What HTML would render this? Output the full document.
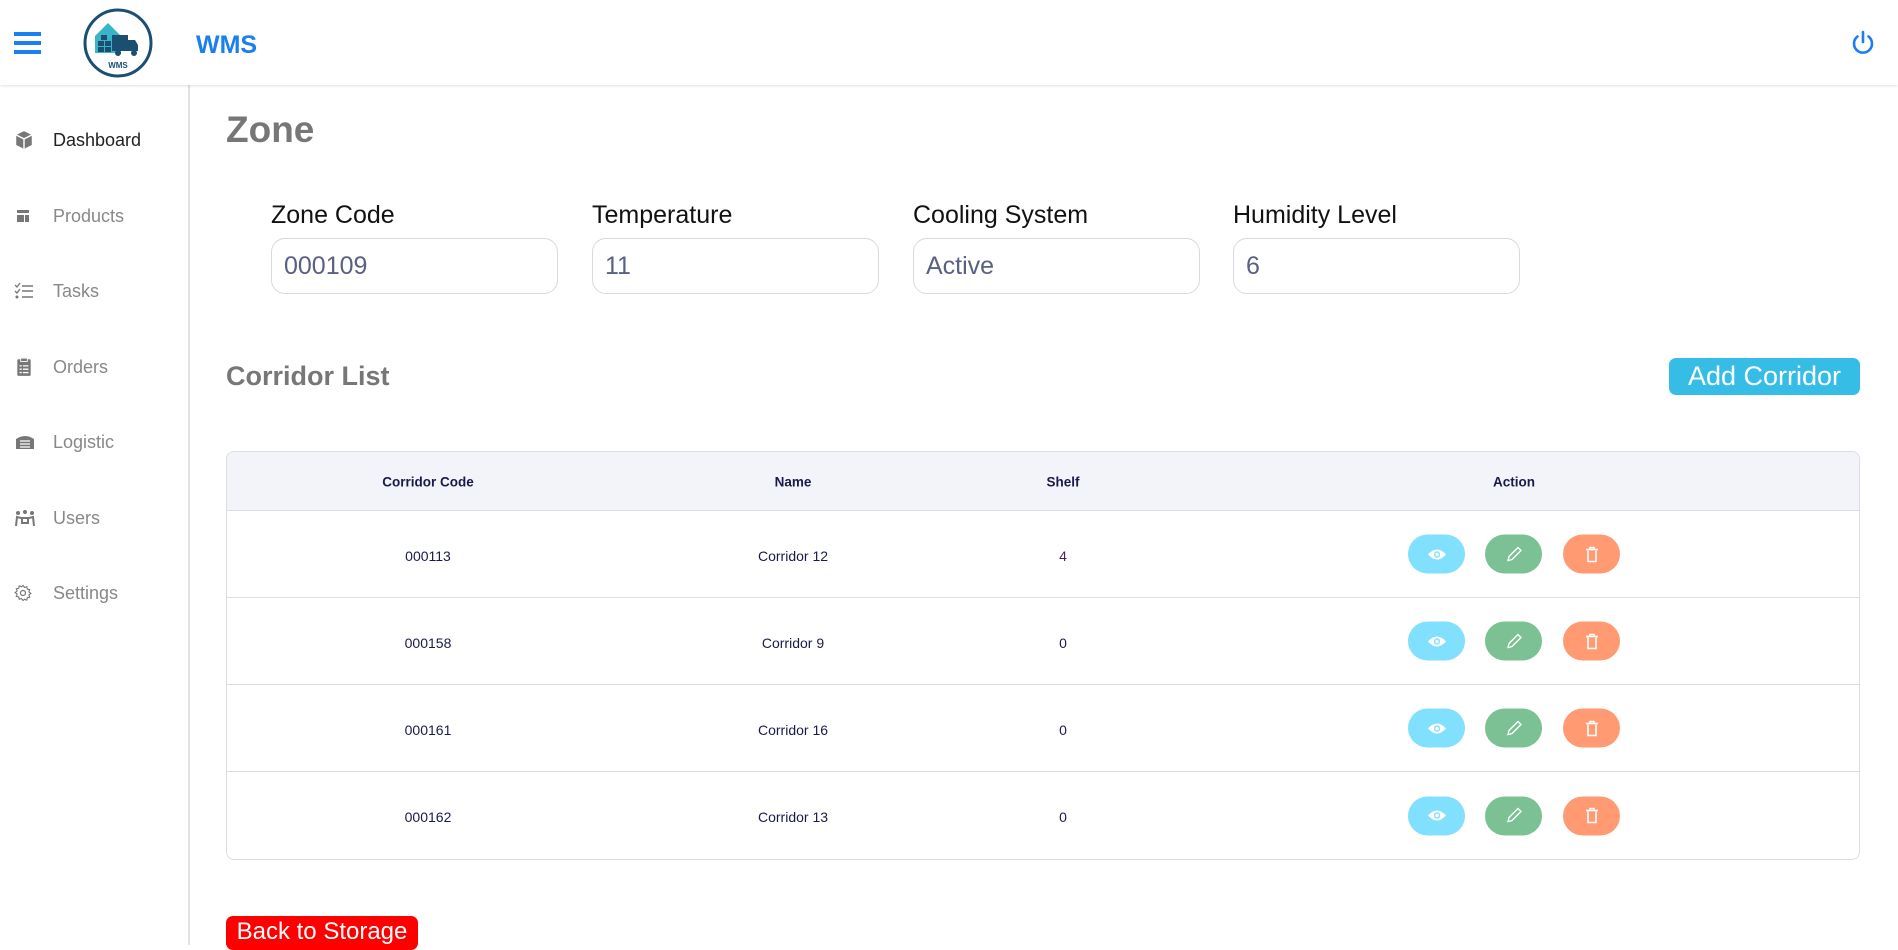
<!DOCTYPE html>
<html><head><meta charset="utf-8"><style>
*{box-sizing:border-box;margin:0;padding:0}
body{width:1898px;height:945px;overflow:hidden;background:#fff;font-family:"Liberation Sans",sans-serif;position:relative}
.hdr{position:absolute;left:0;top:0;width:1898px;height:85px;background:#fff;box-shadow:0 1px 3px rgba(0,0,0,.12);z-index:2}
.side{position:absolute;left:0;top:85px;width:190px;height:860px;border-right:2px solid #e2e2e2}
.item{position:absolute;left:0;height:30px;display:flex;align-items:center;font-size:18px;color:#888}
.item svg{position:absolute;left:14px}
.item span{position:absolute;left:53px;white-space:nowrap}
.abs{position:absolute}
.lbl{position:absolute;top:201px;font-size:25px;color:#111}
.inp{position:absolute;top:238px;width:287px;height:56px;border:1px solid #d8d8e0;border-radius:14px;font-size:25px;color:#5a6080;padding:13px 12px}
.tbl{position:absolute;left:226px;top:451px;width:1634px;height:409px;border:1px solid #dcdde3;border-radius:8px;overflow:hidden}
.th{height:59px;background:#f3f4f9;border-bottom:1px solid #dcdde3;position:relative;font-weight:bold;font-size:13.5px;color:#1a1a4a}
.row{height:87px;border-bottom:1px solid #dcdde3;position:relative;font-size:14px;color:#1a1a4a}
.c{position:absolute;top:52%;transform:translate(-50%,-50%);white-space:nowrap}
.b{position:absolute;top:50%;transform:translateY(-50%);width:57px;height:39px;border-radius:20px;display:flex;align-items:center;justify-content:center}
</style></head><body>
<div class="hdr">
<svg class="abs" style="left:14px;top:32px" width="27" height="22"><rect y="0" width="27" height="4" fill="#1a7fef"/><rect y="9" width="27" height="4" fill="#1a7fef"/><rect y="18" width="27" height="4" fill="#1a7fef"/></svg>
<svg class="abs" style="left:81px;top:8px" width="74" height="70" viewBox="0 0 74 70">
<circle cx="37" cy="35" r="33" fill="#fff" stroke="#1b4f72" stroke-width="3"/>
<path d="M14 28 L27 15 L40 28 L40 45 L14 45 Z" fill="#3ab5c8"/>
<rect x="17" y="33" width="6" height="5" fill="#1b4f72"/><rect x="24" y="33" width="6" height="5" fill="#1b4f72"/><rect x="20" y="27" width="6" height="5" fill="#1b4f72"/><rect x="17" y="39" width="6" height="5" fill="#1b4f72"/><rect x="24" y="39" width="6" height="5" fill="#1b4f72"/>
<rect x="31" y="27" width="16" height="16" fill="#1b4f72"/><path d="M47 32 L54 32 L57 37 L57 43 L47 43Z" fill="#1b4f72"/>
<circle cx="37" cy="45" r="3" fill="#1b4f72"/><circle cx="53" cy="45" r="3" fill="#1b4f72"/>
<text x="37" y="60" font-size="8" font-weight="bold" text-anchor="middle" fill="#1b4f72" font-family="Liberation Sans">WMS</text>
</svg>
<div class="abs" style="left:196px;top:31px;font-size:25px;font-weight:bold;color:#1a7fef">WMS</div>
<svg class="abs" style="left:1850px;top:30px" width="26" height="26" viewBox="0 0 26 26"><path d="M7.5 6.5 A9 9 0 1 0 18.5 6.5" fill="none" stroke="#1a7fef" stroke-width="2.6" stroke-linecap="round"/><line x1="13" y1="2" x2="13" y2="12" stroke="#1a7fef" stroke-width="2.6" stroke-linecap="round"/></svg>
</div>
<div class="side">
<div class="item" style="top:40px;color:#222"><svg width="20" height="20" viewBox="0 0 18 18"><path d="M9 1 L16 4.5 L16 13.5 L9 17 L2 13.5 L2 4.5Z" fill="#777"/><path d="M2 4.5 L9 8 L16 4.5 M9 8 L9 17" stroke="#fff" stroke-width="1.3" fill="none"/></svg><span>Dashboard</span></div>
<div class="item" style="top:116px"><svg width="18" height="18" viewBox="0 0 18 18"><rect x="3" y="3" width="12" height="3" fill="#777"/><rect x="3" y="8" width="7" height="7" fill="#777"/><rect x="11" y="8" width="4" height="7" fill="#777"/></svg><span>Products</span></div>
<div class="item" style="top:191px"><svg width="20" height="18" viewBox="0 0 20 18"><path d="M1 3 L3 5 L6 1 M1 9 L3 11 L6 7" stroke="#777" stroke-width="1.3" fill="none"/><circle cx="3" cy="15" r="1.5" fill="#777"/><path d="M8 4h11M8 9h11M8 15h11" stroke="#777" stroke-width="1.6"/></svg><span>Tasks</span></div>
<div class="item" style="top:267px"><svg width="20" height="20" viewBox="0 0 18 18"><rect x="3" y="2" width="12" height="15" rx="1" fill="#777"/><rect x="6" y="1" width="6" height="3" fill="#777" stroke="#fff" stroke-width=".8"/><path d="M5 8h2M8 8h5M5 11h2M8 11h5M5 14h2M8 14h5" stroke="#fff" stroke-width="1.2"/></svg><span>Orders</span></div>
<div class="item" style="top:342px"><svg width="22" height="18" viewBox="0 0 20 18"><path d="M1 6 Q10 0 19 6 L19 16 L1 16Z" fill="#777"/><path d="M5 8h10M5 11h10M5 14h10" stroke="#fff" stroke-width="1.2"/></svg><span>Logistic</span></div>
<div class="item" style="top:418px"><svg width="22" height="18" viewBox="0 0 22 18"><circle cx="4" cy="4" r="2" fill="#777"/><circle cx="11" cy="3" r="2" fill="#777"/><circle cx="18" cy="4" r="2" fill="#777"/><path d="M2 17 L3 8 L7 9 L15 9 L19 8 L20 17 M8 9 L8 14 L14 14 L14 9" stroke="#777" stroke-width="2" fill="none"/></svg><span>Users</span></div>
<div class="item" style="top:493px"><svg width="18" height="18" viewBox="0 0 18 18"><circle cx="9" cy="9" r="2.5" fill="none" stroke="#777" stroke-width="1.2"/><path d="M9 1.5l1.5 2 2.3-.8.5 2.4 2.4.5-.8 2.3 2 1.5-2 1.5.8 2.3-2.4.5-.5 2.4-2.3-.8L9 16.5l-1.5-2-2.3.8-.5-2.4-2.4-.5.8-2.3-2-1.5 2-1.5-.8-2.3 2.4-.5.5-2.4 2.3.8Z" fill="none" stroke="#777" stroke-width="1.1"/></svg><span>Settings</span></div>
</div>
<div class="abs" style="left:226px;top:109px;font-size:37px;font-weight:bold;color:#777">Zone</div>
<div class="lbl" style="left:271px">Zone Code</div><div class="lbl" style="left:592px">Temperature</div><div class="lbl" style="left:913px">Cooling System</div><div class="lbl" style="left:1233px">Humidity Level</div>
<div class="inp" style="left:271px">000109</div><div class="inp" style="left:592px">11</div><div class="inp" style="left:913px">Active</div><div class="inp" style="left:1233px">6</div>
<div class="abs" style="left:226px;top:361px;font-size:27px;font-weight:bold;color:#777">Corridor List</div>
<div class="abs" style="left:1669px;top:358px;width:191px;height:37px;background:#36bde6;border-radius:7px;color:#fff;font-size:27px;text-align:center;line-height:37px">Add Corridor</div>
<div class="tbl">
<div class="th"><div class="c" style="left:201px">Corridor Code</div><div class="c" style="left:566px">Name</div><div class="c" style="left:836px">Shelf</div><div class="c" style="left:1287px">Action</div></div>
<div class="row"><div class="c" style="left:201px">000113</div><div class="c" style="left:566px">Corridor 12</div><div class="c" style="left:836px;color:#5a1a5a">4</div>
<div class="b" style="left:1181px;background:#80e0fd"><svg width="20" height="14" viewBox="0 0 20 14"><path d="M1 7 Q10 -3 19 7 Q10 17 1 7Z" fill="#fff"/><circle cx="10" cy="7" r="3.2" fill="#80e0fd"/><circle cx="10" cy="7" r="1.8" fill="#fff"/></svg></div>
<div class="b" style="left:1258px;background:#7bc193"><svg width="18" height="18" viewBox="0 0 18 18"><path d="M3 15 L4 11 L13 2 L16 5 L7 14Z" fill="none" stroke="#fff" stroke-width="1.4"/></svg></div>
<div class="b" style="left:1336px;background:#ff9a72"><svg width="14" height="16" viewBox="0 0 14 16"><path d="M1 3h12M5 3V1h4v2M3 4v11h8V4" fill="none" stroke="#fff" stroke-width="1.6"/></svg></div></div>
<div class="row"><div class="c" style="left:201px">000158</div><div class="c" style="left:566px">Corridor 9</div><div class="c" style="left:836px">0</div>
<div class="b" style="left:1181px;background:#80e0fd"><svg width="20" height="14" viewBox="0 0 20 14"><path d="M1 7 Q10 -3 19 7 Q10 17 1 7Z" fill="#fff"/><circle cx="10" cy="7" r="3.2" fill="#80e0fd"/><circle cx="10" cy="7" r="1.8" fill="#fff"/></svg></div>
<div class="b" style="left:1258px;background:#7bc193"><svg width="18" height="18" viewBox="0 0 18 18"><path d="M3 15 L4 11 L13 2 L16 5 L7 14Z" fill="none" stroke="#fff" stroke-width="1.4"/></svg></div>
<div class="b" style="left:1336px;background:#ff9a72"><svg width="14" height="16" viewBox="0 0 14 16"><path d="M1 3h12M5 3V1h4v2M3 4v11h8V4" fill="none" stroke="#fff" stroke-width="1.6"/></svg></div></div>
<div class="row"><div class="c" style="left:201px">000161</div><div class="c" style="left:566px">Corridor 16</div><div class="c" style="left:836px">0</div>
<div class="b" style="left:1181px;background:#80e0fd"><svg width="20" height="14" viewBox="0 0 20 14"><path d="M1 7 Q10 -3 19 7 Q10 17 1 7Z" fill="#fff"/><circle cx="10" cy="7" r="3.2" fill="#80e0fd"/><circle cx="10" cy="7" r="1.8" fill="#fff"/></svg></div>
<div class="b" style="left:1258px;background:#7bc193"><svg width="18" height="18" viewBox="0 0 18 18"><path d="M3 15 L4 11 L13 2 L16 5 L7 14Z" fill="none" stroke="#fff" stroke-width="1.4"/></svg></div>
<div class="b" style="left:1336px;background:#ff9a72"><svg width="14" height="16" viewBox="0 0 14 16"><path d="M1 3h12M5 3V1h4v2M3 4v11h8V4" fill="none" stroke="#fff" stroke-width="1.6"/></svg></div></div>
<div class="row" style="border-bottom:none"><div class="c" style="left:201px">000162</div><div class="c" style="left:566px">Corridor 13</div><div class="c" style="left:836px">0</div>
<div class="b" style="left:1181px;background:#80e0fd"><svg width="20" height="14" viewBox="0 0 20 14"><path d="M1 7 Q10 -3 19 7 Q10 17 1 7Z" fill="#fff"/><circle cx="10" cy="7" r="3.2" fill="#80e0fd"/><circle cx="10" cy="7" r="1.8" fill="#fff"/></svg></div>
<div class="b" style="left:1258px;background:#7bc193"><svg width="18" height="18" viewBox="0 0 18 18"><path d="M3 15 L4 11 L13 2 L16 5 L7 14Z" fill="none" stroke="#fff" stroke-width="1.4"/></svg></div>
<div class="b" style="left:1336px;background:#ff9a72"><svg width="14" height="16" viewBox="0 0 14 16"><path d="M1 3h12M5 3V1h4v2M3 4v11h8V4" fill="none" stroke="#fff" stroke-width="1.6"/></svg></div></div>
</div>
<div class="abs" style="left:226px;top:916px;width:192px;height:34px;background:#f00;border-radius:7px;color:#fff;font-size:24px;text-align:center;line-height:32px">Back to Storage</div>
</body></html>
